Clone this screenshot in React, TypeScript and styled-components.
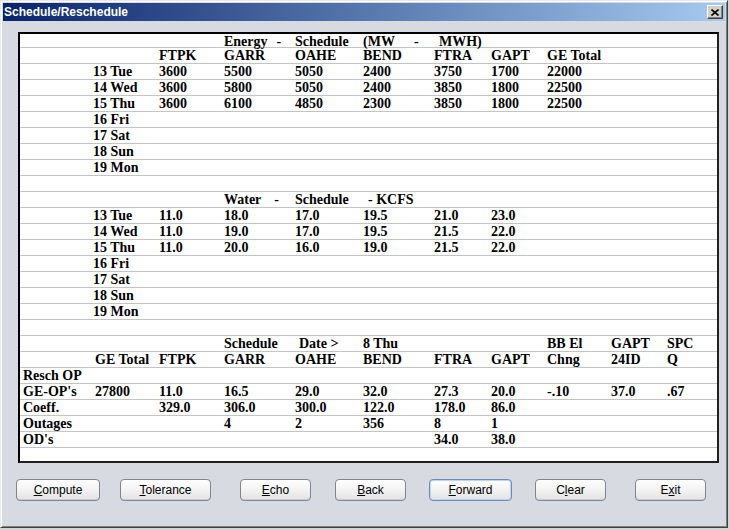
import React from 'react';
import styled, { createGlobalStyle } from 'styled-components';

const Global = createGlobalStyle`
  html, body { margin: 0; padding: 0; background: #d4d4d4; }
  body { width: 730px; height: 530px; overflow: hidden; }
`;

const Window = styled.div`
  width: 728px;
  height: 528px;
  box-sizing: border-box;
  background: #d8dae1;
  border: 1px solid;
  border-color: #e8e8e8 #404040 #404040 #e8e8e8;
  box-shadow: inset 1px 1px 0 #ffffff, inset -1px -1px 0 #808080;
  padding: 2px;
  display: flex;
  flex-direction: column;
`;

const TitleBar = styled.div`
  height: 18px;
  flex: none;
  display: flex;
  align-items: center;
  justify-content: space-between;
  padding: 0 2px 0 1px;
  background: linear-gradient(to right, #0a246a, #a6caf0);
`;

const Title = styled.span`
  color: #fff;
  font: bold 12px "Liberation Sans", Arial, sans-serif;
  letter-spacing: 0;
`;

const CloseBtn = styled.div`
  width: 16px;
  height: 14px;
  box-sizing: border-box;
  background: #d4d0c8;
  border: 1px solid;
  border-color: #ffffff #404040 #404040 #ffffff;
  box-shadow: inset -1px -1px 0 #808080;
  display: flex;
  align-items: center;
  justify-content: center;
`;

const Content = styled.div`
  padding: 11px 0 0 15px;
`;

const Table = styled.div`
  width: 701px;
  height: 431px;
  box-sizing: border-box;
  background: #fff;
  border: 2px solid #000;
  border-right-color: #202020;
  border-bottom-color: #202020;
  display: flex;
  flex-direction: column;
  font: bold 14px "Liberation Serif", "Times New Roman", serif;
  color: #000;
`;

const Row = styled.div`
  height: 16px;
  flex: none;
  box-sizing: border-box;
  border-bottom: 1px solid #c4c4c4;
  display: grid;
  grid-template-columns: 70px 66px 65px 71px 68px 71px 57px 56px 64px 56px 1fr;
  align-items: center;
  padding-left: 3px;
  line-height: 15px;
  white-space: nowrap;
  &:first-child { height: 14px; }
  &:last-child { height: 13px; border-bottom: none; }
`;

const Cell = styled.span<{ $indent: number }>`
  padding-left: ${(p) => p.$indent}px;
  overflow: visible;
`;

const Dash = styled.span<{ $gap: number }>`
  margin-left: ${(p) => p.$gap}px;
`;

const ButtonBar = styled.div`
  display: flex;
  padding: 16px 0 0 13px;
`;

const Button = styled.button<{ $w: number; $ml: number; $focus?: boolean }>`
  width: ${(p) => p.$w}px;
  margin-left: ${(p) => p.$ml}px;
  height: 22px;
  padding: 0;
  box-sizing: border-box;
  border: 1px solid ${(p) => (p.$focus ? '#6a8cbc' : '#80848c')};
  border-radius: 4px;
  background: linear-gradient(#ffffff 0%, #f4f4f4 45%, #e2e2e4 100%);
  box-shadow: ${(p) => (p.$focus ? 'inset 0 0 0 1px #c0d4ee' : 'inset 0 -1px 0 #d0d0d4')};
  font: 12px "Liberation Sans", Arial, sans-serif;
  color: #000;
  display: flex;
  align-items: center;
  justify-content: center;
  cursor: default;
`;

type C = React.ReactNode | { t: React.ReactNode; i: number };

const days = ['16 Fri', '17 Sat', '18 Sun', '19 Mon'];

const rows: C[][] = [
  [
    '', '', '',
    <>Energy<Dash $gap={9}>-</Dash></>,
    'Schedule',
    <>(MW<Dash $gap={19}>-</Dash></>,
    { t: 'MWH)', i: 5 },
  ],
  ['', '', 'FTPK', 'GARR', 'OAHE', 'BEND', 'FTRA', 'GAPT', 'GE Total'],
  ['', '13 Tue', '3600', '5500', '5050', '2400', '3750', '1700', '22000'],
  ['', '14 Wed', '3600', '5800', '5050', '2400', '3850', '1800', '22500'],
  ['', '15 Thu', '3600', '6100', '4850', '2300', '3850', '1800', '22500'],
  ...days.map((d) => ['', d]),
  [],
  [
    '', '', '',
    <>Water<Dash $gap={13}>-</Dash></>,
    'Schedule',
    { t: '- KCFS', i: 5 },
  ],
  ['', '13 Tue', '11.0', '18.0', '17.0', '19.5', '21.0', '23.0'],
  ['', '14 Wed', '11.0', '19.0', '17.0', '19.5', '21.5', '22.0'],
  ['', '15 Thu', '11.0', '20.0', '16.0', '19.0', '21.5', '22.0'],
  ...days.map((d) => ['', d]),
  [],
  ['', '', '', 'Schedule', { t: 'Date >', i: 4 }, '8 Thu', '', '', 'BB El', 'GAPT', 'SPC'],
  ['', { t: 'GE Total', i: 2 }, 'FTPK', 'GARR', 'OAHE', 'BEND', 'FTRA', 'GAPT', 'Chng', '24ID', 'Q'],
  ['Resch OP'],
  ["GE-OP's", { t: '27800', i: 2 }, '11.0', '16.5', '29.0', '32.0', '27.3', '20.0', '-.10', '37.0', '.67'],
  ['Coeff.', '', '329.0', '306.0', '300.0', '122.0', '178.0', '86.0'],
  ['Outages', '', '', '4', '2', '356', '8', '1'],
  ["OD's", '', '', '', '', '', '34.0', '38.0'],
  [],
];

const isObj = (c: C): c is { t: React.ReactNode; i: number } =>
  typeof c === 'object' && c !== null && !React.isValidElement(c) && 't' in (c as object);

const buttons: { label: React.ReactNode; w: number; ml: number; focus?: boolean }[] = [
  { label: <><u>C</u>ompute</>, w: 84, ml: 0 },
  { label: <><u>T</u>olerance</>, w: 91, ml: 20 },
  { label: <><u>E</u>cho</>, w: 71, ml: 29 },
  { label: <><u>B</u>ack</>, w: 71, ml: 24 },
  { label: <><u>F</u>orward</>, w: 83, ml: 23, focus: true },
  { label: <>C<u>l</u>ear</>, w: 71, ml: 23 },
  { label: <>E<u>x</u>it</>, w: 71, ml: 29 },
];

export default function App() {
  return (
    <>
      <Global />
      <Window>
        <TitleBar>
          <Title>Schedule/Reschedule</Title>
          <CloseBtn>
            <svg width="8" height="7" viewBox="0 0 8 7">
              <path d="M0.5 0.5 L7.5 6.5 M7.5 0.5 L0.5 6.5" stroke="#000" strokeWidth="1.6" />
            </svg>
          </CloseBtn>
        </TitleBar>
        <Content>
          <Table>
            {rows.map((r, ri) => (
              <Row key={ri}>
                {Array.from({ length: 11 }).map((_, ci) => {
                  const c = r[ci];
                  if (c === undefined || c === '') return <Cell key={ci} $indent={0} />;
                  if (isObj(c)) return <Cell key={ci} $indent={c.i}>{c.t}</Cell>;
                  return <Cell key={ci} $indent={0}>{c}</Cell>;
                })}
              </Row>
            ))}
          </Table>
        </Content>
        <ButtonBar>
          {buttons.map((b, i) => (
            <Button key={i} $w={b.w} $ml={b.ml} $focus={b.focus}>
              <span>{b.label}</span>
            </Button>
          ))}
        </ButtonBar>
      </Window>
    </>
  );
}
